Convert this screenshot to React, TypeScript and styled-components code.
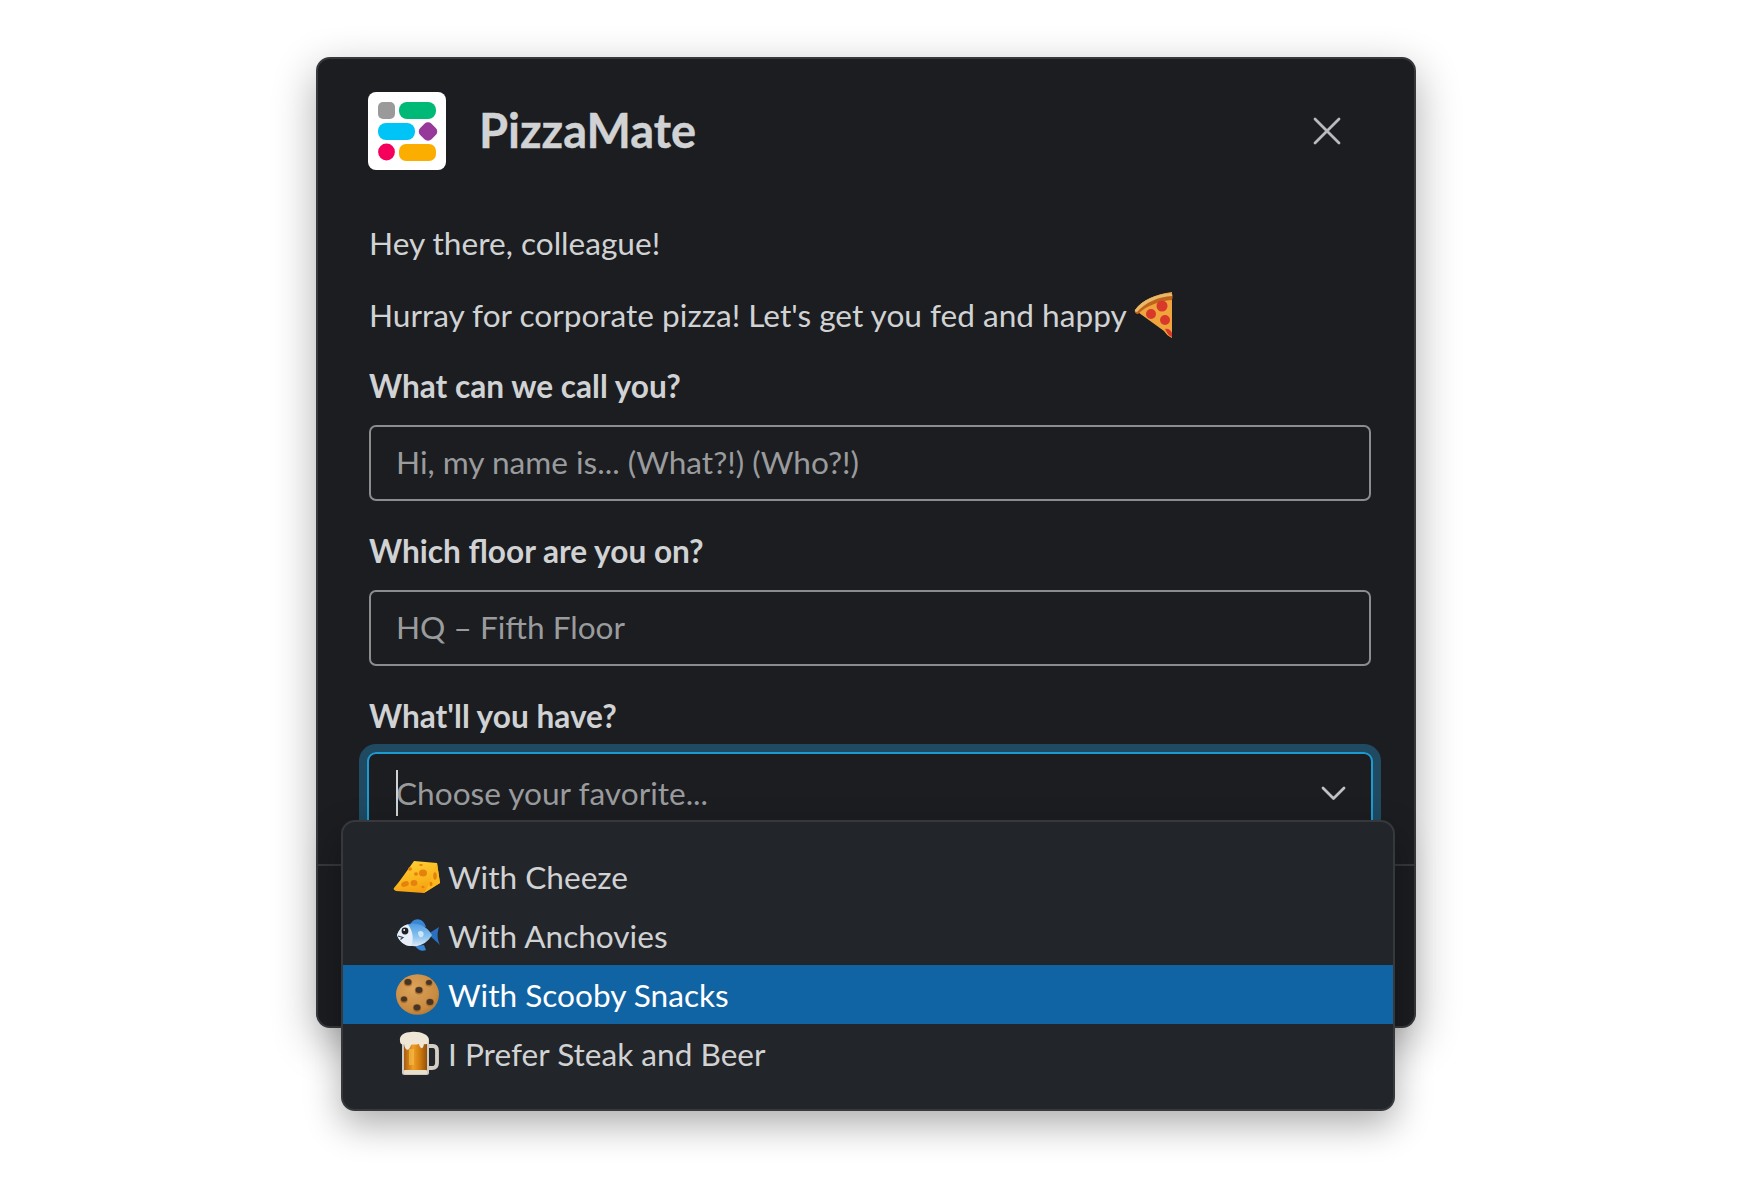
import React from "react";
import styled, { createGlobalStyle } from "styled-components";

const Global = createGlobalStyle`
  html, body { margin: 0; padding: 0; background: #fff; }
  body { font-family: Lato, "Noto Sans", sans-serif; -webkit-font-smoothing: antialiased; }
`;

const Page = styled.div`
  width: 1738px;
  height: 1200px;
  box-sizing: border-box;
  padding: 57px 0 0 316px;
  background: #fff;
  overflow: hidden;
`;

const Modal = styled.section`
  width: 1100px;
  height: 971px;
  box-sizing: border-box;
  background: #1b1d21;
  border: 2px solid #36383c;
  border-radius: 14px;
  box-shadow: 0 14px 44px rgba(0, 0, 0, 0.32);
  display: flex;
  flex-direction: column;
`;

const Header = styled.header`
  display: flex;
  align-items: center;
  height: 78px;
  padding: 33px 73px 0 50px;
  flex: none;
`;

const Logo = styled.svg`
  width: 78px;
  height: 78px;
  flex: none;
`;

const Title = styled.h1`
  margin: -2px 0 0 33px;
  font-size: 47px;
  line-height: 78px;
  font-weight: 700;
  color: #d1d2d3;
  flex: 1;
  -webkit-text-stroke: 0.4px #d1d2d3;
`;

const CloseIcon = styled.svg`
  width: 28px;
  height: 28px;
  flex: none;
`;

const Content = styled.div`
  flex: none;
  height: 696px;
  box-sizing: border-box;
  padding: 0 43px 0 51px;
  border-bottom: 2px solid #36383c;
  display: flex;
  flex-direction: column;
`;

const Paragraph = styled.p<{ $top: number }>`
  margin: ${(p) => p.$top}px 0 0;
  font-size: 31.6px;
  line-height: 40px;
  color: #d1d2d3;
  display: flex;
  align-items: center;
`;

const PizzaIcon = styled.svg`
  width: 39px;
  height: 46px;
  margin-left: 7px;
  margin-top: -3px;
  margin-bottom: -3px;
  flex: none;
`;

const Label = styled.label<{ $top: number }>`
  display: block;
  margin-top: ${(p) => p.$top}px;
  font-size: 31.6px;
  line-height: 41px;
  font-weight: 700;
  color: #d1d2d3;
`;

const Input = styled.div`
  margin-top: 18px;
  height: 76px;
  box-sizing: border-box;
  border: 2px solid #8b8c8e;
  border-radius: 7px;
  padding: 0 25px 3px;
  display: flex;
  align-items: center;
  font-size: 31.6px;
  color: #9a9b9d;
`;

const SelectWrap = styled.div`
  position: relative;
  margin-top: 15px;
`;

const SelectField = styled.div`
  height: 84px;
  box-sizing: border-box;
  margin: 0 -2px;
  border: 2px solid #1d9bd1;
  border-radius: 9px;
  box-shadow: 0 0 0 8px #1f4a62;
  padding: 0 25px 2px 27px;
  display: flex;
  align-items: center;
  justify-content: space-between;
  font-size: 31.6px;
  color: #9a9b9d;
`;

const Placeholder = styled.span`
  position: relative;
  &::before {
    content: "";
    position: absolute;
    left: 0;
    top: -4px;
    bottom: -4px;
    width: 2px;
    background: #d1d2d3;
  }
`;

const Chevron = styled.svg`
  width: 25px;
  height: 15px;
  flex: none;
`;

const Menu = styled.ul`
  position: absolute;
  left: -28px;
  top: 68px;
  width: 1054px;
  height: 291px;
  box-sizing: border-box;
  margin: 0;
  padding: 25px 0;
  list-style: none;
  background: #222529;
  border: 2px solid #36383c;
  border-radius: 14px;
  box-shadow: 0 14px 36px rgba(0, 0, 0, 0.32);
`;

const Option = styled.li<{ $active?: boolean }>`
  height: 59px;
  display: flex;
  align-items: center;
  font-size: 31.6px;
  color: ${(p) => (p.$active ? "#fff" : "#d1d2d3")};
  background: ${(p) => (p.$active ? "#1164a3" : "transparent")};
`;

const EmojiSlot = styled.span`
  width: 105px;
  height: 59px;
  flex: none;
  display: flex;
  align-items: center;
  justify-content: flex-end;
`;

const Emoji = styled.svg<{ $w: number; $h: number; $r: number }>`
  width: ${(p) => p.$w}px;
  height: ${(p) => p.$h}px;
  margin-right: ${(p) => p.$r}px;
  flex: none;
  overflow: visible;
`;

const Cheese = () => (
  <Emoji $w={48} $h={34} $r={7} viewBox="0 0 48 34">
    <defs>
      <linearGradient id="ch" x1="0.3" y1="0" x2="0.6" y2="1">
        <stop offset="0" stopColor="#ffce33" />
        <stop offset="0.6" stopColor="#fbb51c" />
        <stop offset="1" stopColor="#f39c0f" />
      </linearGradient>
    </defs>
    <path d="M1 28 C8 20 15 9 21 1 L44 3 L47 23 L31 33 L3 31 C1 30 0 29 1 28 Z" fill="url(#ch)" />
    <path d="M31 33 C37 24 41 12 44 3 L47 23 Z" fill="#fcb81d" />
    <g fill="#e5820d">
      <ellipse cx="30" cy="13" rx="4" ry="3.6" />
      <ellipse cx="12" cy="24" rx="4" ry="2.6" transform="rotate(-20 12 24)" />
      <ellipse cx="21" cy="23" rx="3.4" ry="3" />
      <ellipse cx="23" cy="14" rx="2" ry="1.7" />
      <ellipse cx="17" cy="9" rx="2" ry="1.7" />
      <ellipse cx="28" cy="5" rx="1.8" ry="1" />
      <ellipse cx="42" cy="16" rx="1.8" ry="3.8" />
      <ellipse cx="38" cy="24" rx="1.5" ry="2.2" />
      <ellipse cx="30" cy="27" rx="1.6" ry="1.2" />
    </g>
  </Emoji>
);

const Fish = () => (
  <Emoji $w={43} $h={33} $r={8} viewBox="0 0 43 33">
    <defs>
      <linearGradient id="fb" x1="0" y1="0" x2="0" y2="1">
        <stop offset="0" stopColor="#4f9ce2" />
        <stop offset="0.6" stopColor="#8cc4f0" />
        <stop offset="1" stopColor="#dfeaf4" />
      </linearGradient>
    </defs>
    <path d="M31 15 L42 8 C40 14 40 20 43 26 Z" fill="#2a6fc0" />
    <path d="M13 6 C15 1 19 -1 24 1 C27 3 28 5 29 8 Z" fill="#3a86d6" />
    <path d="M18 27 L27 26 L29 31 C25 33 21 31 18 27 Z" fill="#3a86d6" />
    <path d="M0 16 C3 7 12 3 20 5 C27 6 32 11 35 16 C31 23 24 28 15 27 C7 27 2 22 0 16 Z" fill="url(#fb)" />
    <path d="M11 5.4 C16 12 17 20 14 27 C7 27 2 22 0 16 C3 8 7 5.8 11 5.4 Z" fill="#e6eff7" />
    <path d="M21 13 C25 10 28 14 26 17 C24 20 21 18 21 13 Z" fill="#cfe4f6" />
    <circle cx="8" cy="12" r="3.4" fill="#1d1f25" />
    <circle cx="7.2" cy="11" r="0.9" fill="#fff" />
    <path d="M1 17 L6 18.5 L3.5 20.5" stroke="#3a4252" strokeWidth="1.1" fill="none" />
  </Emoji>
);

const Chip = ({ x, y, r = 3.4 }: { x: number; y: number; r?: number }) => (
  <g>
    <ellipse cx={x} cy={y + 0.6} rx={r + 0.8} ry={r + 0.6} fill="#a9702e" />
    <ellipse cx={x} cy={y} rx={r} ry={r - 0.4} fill="#463327" />
  </g>
);

const Cookie = () => (
  <Emoji $w={43} $h={41} $r={9} viewBox="0 0 43 41">
    <defs>
      <radialGradient id="ck" cx="0.4" cy="0.35" r="0.75">
        <stop offset="0" stopColor="#dba35c" />
        <stop offset="0.75" stopColor="#c98a40" />
        <stop offset="1" stopColor="#a96f2d" />
      </radialGradient>
    </defs>
    <ellipse cx="21.5" cy="20.5" rx="21.5" ry="20.2" fill="url(#ck)" />
    <Chip x={12} y={8} />
    <Chip x={33} y={8.5} r={2.9} />
    <Chip x={23} y={16} />
    <Chip x={8} y={25} r={3} />
    <Chip x={34} y={28} />
    <Chip x={21} y={33.5} />
  </Emoji>
);

const Beer = () => (
  <Emoji $w={40} $h={45} $r={9} viewBox="0 0 40 45">
    <defs>
      <linearGradient id="br" x1="0" y1="0" x2="1" y2="0">
        <stop offset="0" stopColor="#a85c0e" />
        <stop offset="0.4" stopColor="#ee9f26" />
        <stop offset="0.7" stopColor="#cf7b0e" />
        <stop offset="1" stopColor="#8f500b" />
      </linearGradient>
    </defs>
    <path d="M28 15 H34 C37 15 38 17 38 20 V32 C38 36 36 37 33 37 H28" fill="none" stroke="#d3cfc6" strokeWidth="3.8" />
    <rect x="3" y="9" width="27" height="35" rx="2.5" fill="#cfcbc2" />
    <rect x="5" y="13" width="23" height="27" fill="url(#br)" />
    <path d="M10 18 H15 V34 H10 Z" fill="#f8c04a" opacity="0.6" />
    <rect x="5" y="39" width="23" height="4" rx="1" fill="#e8dfca" />
    <path d="M1 10 C0 4 6 1 12 1 C20 0 30 3 30 9 C30 13 27 14 25 13 C24 19 21 18 20 13 C17 14 14 13 12 14 C10 21 6 20 5 13 C3 14 1 13 1 10 Z" fill="#efe6d6" />
  </Emoji>
);

const App = () => (
  <Page>
    <Global />
    <Modal>
      <Header>
        <Logo viewBox="0 0 78 78">
          <rect width="78" height="78" rx="8" fill="#fff" />
          <rect x="10" y="10" width="17" height="17" rx="5" fill="#9a9a9a" />
          <rect x="31" y="10" width="37" height="17" rx="8" fill="#00b977" />
          <rect x="10" y="31" width="37" height="17" rx="8" fill="#00c4f5" />
          <rect x="52" y="31.5" width="16" height="16" rx="5" transform="rotate(45 60 39.5)" fill="#96399a" />
          <circle cx="18.5" cy="60" r="8.4" fill="#f4005c" />
          <rect x="31" y="52" width="37" height="17" rx="7" fill="#fbad00" />
        </Logo>
        <Title>PizzaMate</Title>
        <CloseIcon viewBox="0 0 28 28">
          <path d="M2 2 L26 26 M26 2 L2 26" stroke="#b9babb" strokeWidth="2.8" strokeLinecap="round" />
        </CloseIcon>
      </Header>
      <Content>
        <Paragraph $top={53}>Hey there, colleague!</Paragraph>
        <Paragraph $top={32}>
          Hurray for corporate pizza! Let's get you fed and happy
          <PizzaIcon viewBox="0 0 39 46">
            <path d="M1 18 C8 8 22 2 38 0 L38 46 C34 44 32 42 30 39 Z" fill="#efa53c" />
            <path d="M1 18 C8 8 22 2 37 1 C39 2 39 5 38 8 C25 9 12 14 4 22 C2 22 0 20 1 18 Z" fill="#c0641c" />
            <path d="M1 18 C8 8 22 2 37 1 C38 2 38.5 3 38 4 C24 5 12 10 3 20 C1.5 20 0.5 19 1 18 Z" fill="#e9b96a" />
            <circle cx="28" cy="14" r="5.5" fill="#d8392b" />
            <circle cx="17" cy="22" r="5" fill="#d8392b" />
            <circle cx="31" cy="28" r="5" fill="#d8392b" />
            <path d="M31 37 C34 36 37 38 38 41 L38 45 C35 44 33 41 31 37 Z" fill="#d8392b" />
          </PizzaIcon>
        </Paragraph>
        <Label $top={31}>What can we call you?</Label>
        <Input>Hi, my name is... (What?!) (Who?!)</Input>
        <Label $top={30}>Which floor are you on?</Label>
        <Input>HQ – Fifth Floor</Input>
        <Label $top={30}>What'll you have?</Label>
        <SelectWrap>
          <SelectField>
            <Placeholder>Choose your favorite...</Placeholder>
            <Chevron viewBox="0 0 25 15">
              <path d="M2 2 L12.5 12.5 L23 2" fill="none" stroke="#c0c1c2" strokeWidth="2.8" strokeLinecap="round" strokeLinejoin="round" />
            </Chevron>
          </SelectField>
          <Menu>
            <Option><EmojiSlot><Cheese /></EmojiSlot>With Cheeze</Option>
            <Option><EmojiSlot><Fish /></EmojiSlot>With Anchovies</Option>
            <Option $active><EmojiSlot><Cookie /></EmojiSlot>With Scooby Snacks</Option>
            <Option><EmojiSlot><Beer /></EmojiSlot>I Prefer Steak and Beer</Option>
          </Menu>
        </SelectWrap>
      </Content>
    </Modal>
  </Page>
);

export default App;
